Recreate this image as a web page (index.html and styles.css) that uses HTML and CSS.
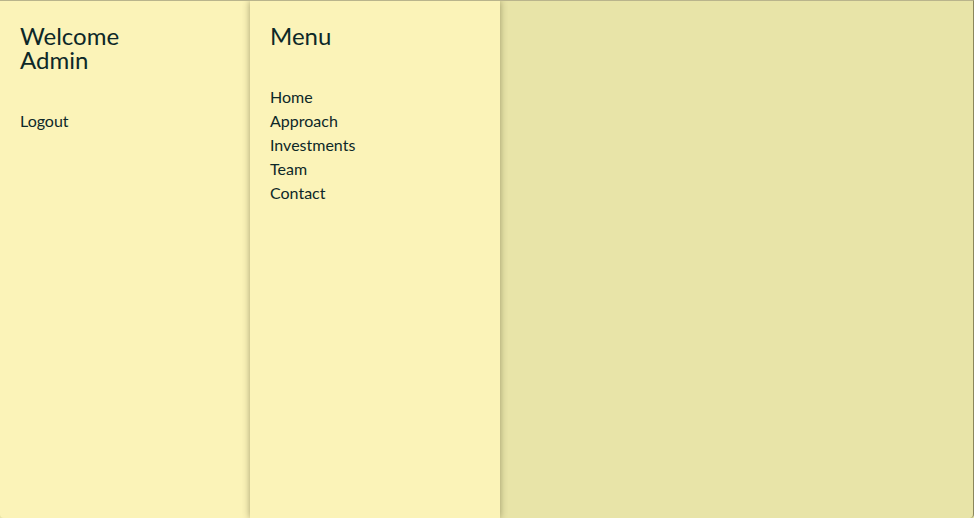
FILE: index.html
```html
<!DOCTYPE html>
<html lang="en">
<head>
<meta charset="utf-8">
<title>Admin</title>
<link rel="stylesheet" href="styles.css">
</head>
<body>
<div class="frame">
  <aside class="panel panel-user">
    <h1 class="title">Welcome<br>Admin</h1>
    <a class="link" href="#">Logout</a>
  </aside>
  <nav class="panel panel-menu">
    <h1 class="title">Menu</h1>
    <ul class="menu">
      <li><a class="link" href="#">Home</a></li>
      <li><a class="link" href="#">Approach</a></li>
      <li><a class="link" href="#">Investments</a></li>
      <li><a class="link" href="#">Team</a></li>
      <li><a class="link" href="#">Contact</a></li>
    </ul>
  </nav>
  <main class="content"></main>
</div>
</body>
</html>
```

FILE: styles.css
```css
html, body {
  margin: 0;
  padding: 0;
  height: 100%;
  background: #e8e4a8;
}
body {
  font-family: Lato, "Noto Sans", sans-serif;
  color: #0d2828;
}
.frame {
  display: flex;
  height: 518px;
  box-sizing: border-box;
  border-top: 1px solid #b9b48c;
  border-right: 1px solid #8a865c;
  border-bottom-left-radius: 4px;
  border-bottom-right-radius: 4px;
  overflow: hidden;
  background: #e8e4a8;
}
.panel {
  flex: 0 0 250px;
  box-sizing: border-box;
  padding: 23px 20px 20px;
  background: #fbf3b8;
}
.panel-menu {
  position: relative;
  box-shadow: 0 0 7px rgba(60, 55, 20, 0.45);
  z-index: 1;
}
.content {
  flex: 1;
}
.title {
  margin: 0 0 37px;
  font-size: 24px;
  line-height: 24px;
  font-weight: 400;
}
.link {
  display: block;
  color: inherit;
  text-decoration: none;
  font-size: 16px;
  line-height: 24px;
}
.menu {
  list-style: none;
  margin: 0;
  padding: 0;
}
```
